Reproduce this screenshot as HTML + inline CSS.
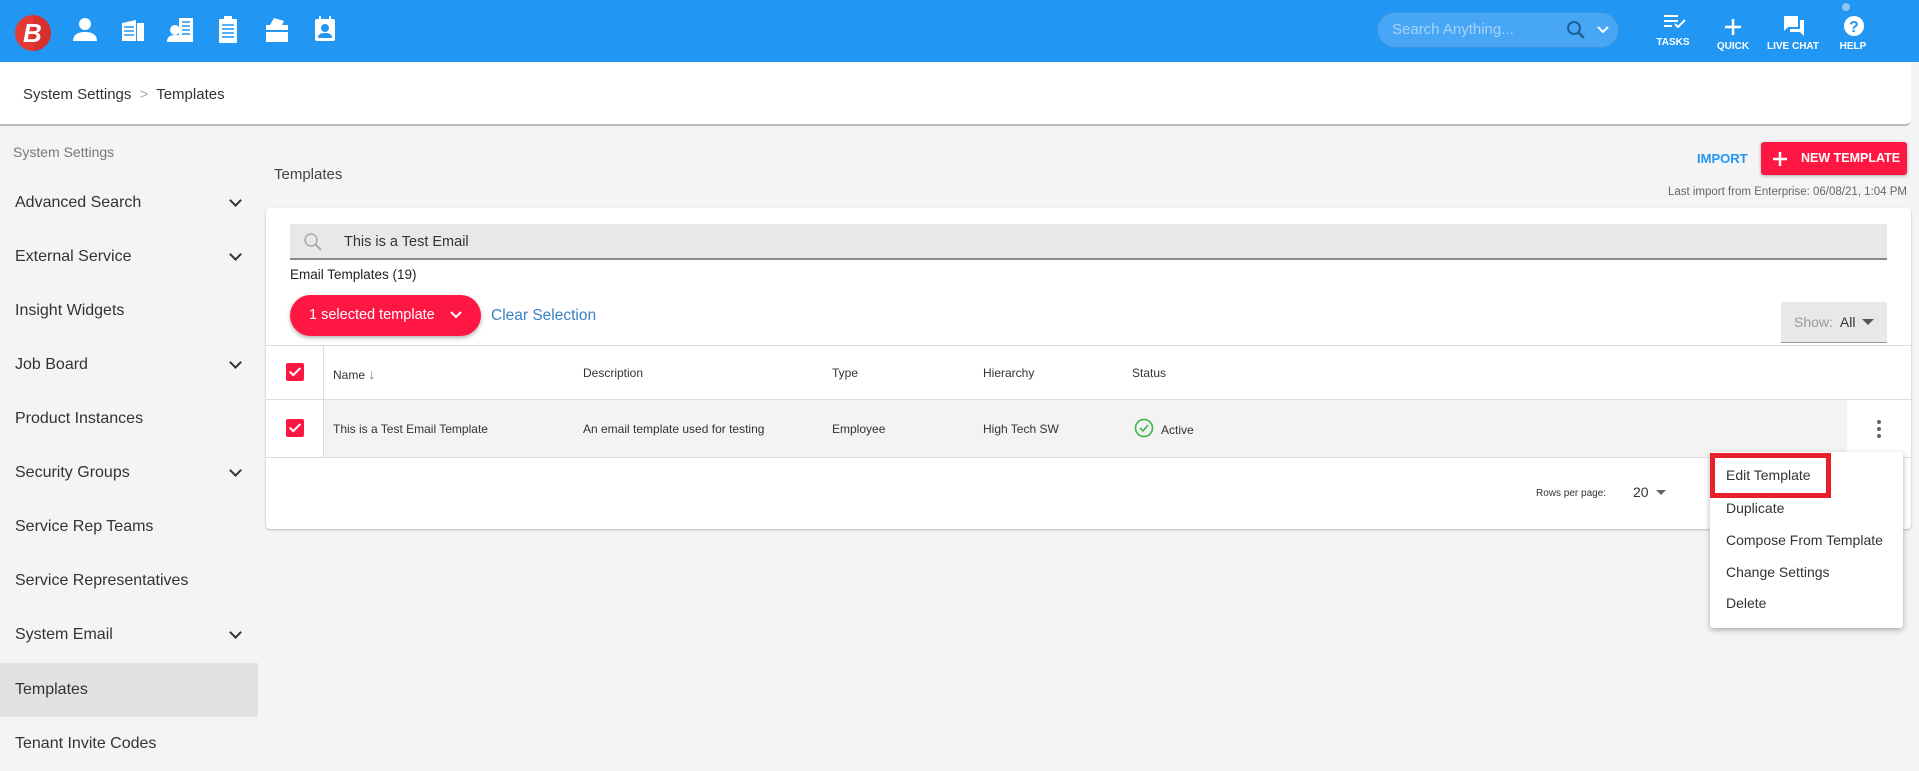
<!DOCTYPE html>
<html><head><meta charset="utf-8"><style>
*{box-sizing:border-box;margin:0;padding:0}
body{width:1919px;height:766px;overflow:hidden;background:#f4f4f4;font-family:"Liberation Sans",sans-serif;color:#333;position:relative}
.abs{position:absolute;white-space:nowrap}
.hdr{left:0;top:0;width:1919px;height:62px;background:#2196f3}
.bc{left:0;top:62px;width:1911px;height:64px;background:#fff;border-bottom:2px solid #bbb;border-radius:0 0 6px 0}
.side{left:0;top:126px;width:258px;height:640px}
.si{position:absolute;left:0;width:258px;height:54px;line-height:54px;padding-left:15px;font-size:16px;color:#333}
.si .ch{position:absolute;right:18px;top:20px;width:9px;height:9px;border-right:2px solid #333;border-bottom:2px solid #333;transform:rotate(45deg)}
.card{left:266px;top:208px;width:1645px;height:321px;background:#fff;border-radius:4px;box-shadow:0 1px 2px rgba(0,0,0,.25)}
.cb{position:absolute;width:18px;height:18px;background:#ff1744;border-radius:2px}
.cb:after{content:"";position:absolute;left:6px;top:2px;width:4px;height:9px;border-right:2px solid #fff;border-bottom:2px solid #fff;transform:rotate(45deg)}
.th{position:absolute;font-size:12px;color:#333;white-space:nowrap}
.ic{fill:#fff}
.nl{position:absolute;color:#fff;font-size:10px;font-weight:bold;text-align:center;width:70px}
.mi{position:absolute;left:1726px;font-size:14px;color:#333;white-space:nowrap}
</style></head><body>
<div class="abs hdr">
<svg class="abs" style="left:14px;top:14px" width="38" height="38" viewBox="0 0 38 38"><circle cx="19" cy="19" r="18" fill="#e53935"/><path d="M19 1a18 18 0 0 1 0 36z" fill="#c62828" opacity=".5"/><text x="9" y="28" font-family="Liberation Sans" font-weight="bold" font-style="italic" font-size="26" fill="#fff">B</text></svg>
<svg class="abs" style="left:72px;top:18px" width="28" height="24" viewBox="0 0 28 24"><circle class="ic" cx="13" cy="6" r="6"/><path class="ic" d="M1 23c0-7 6-9 12-9s12 2 12 9z"/></svg>
<svg class="abs" style="left:120px;top:19px" width="26" height="22"><path class="ic" d="M2 4l14-3v21H2zM17 4h7v18h-7z"/><path d="M4 8h10M4 12h10M4 16h10" stroke="#2196f3" stroke-width="1.5"/></svg>
<svg class="abs" style="left:167px;top:17px" width="28" height="26"><rect class="ic" x="12" y="1" width="14" height="24"/><circle class="ic" cx="8" cy="13" r="5"/><path class="ic" d="M0 25c0-6 4-7 9-7s8 2 8 7z"/><path d="M15 5h8M15 9h8M15 13h8M15 17h8" stroke="#2196f3" stroke-width="1.5"/></svg>
<svg class="abs" style="left:218px;top:16px" width="20" height="28"><rect class="ic" x="1" y="3" width="18" height="24" rx="1"/><rect class="ic" x="6" y="0" width="8" height="5"/><path d="M4 9h12M4 13h12M4 17h12M4 21h12" stroke="#2196f3" stroke-width="1.5"/></svg>
<svg class="abs" style="left:264px;top:17px" width="26" height="26"><path class="ic" d="M2 8h22v17H2z"/><path class="ic" d="M6 8l4-7 10 3-2 4z"/><path d="M2 14h22" stroke="#2196f3" stroke-width="2"/></svg>
<svg class="abs" style="left:314px;top:16px" width="22" height="26"><rect class="ic" x="1" y="3" width="20" height="22" rx="2"/><rect class="ic" x="5" y="0" width="2" height="5"/><rect class="ic" x="15" y="0" width="2" height="5"/><circle cx="11" cy="12" r="4" fill="#2196f3"/><path d="M4 22c0-4 3-5 7-5s7 1 7 5z" fill="#2196f3"/></svg>
<div class="abs" style="left:1377px;top:12px;width:242px;height:36px;border-radius:18px;background:#47a6f5;border:1px solid #3a95e0"></div>
<div class="abs" style="left:1392px;top:21px;font-size:15px;color:#a6d2fa">Search Anything...</div>
<svg class="abs" style="left:1566px;top:20px" width="20" height="20"><circle cx="8" cy="8" r="6" fill="none" stroke="#1f5f96" stroke-width="2"/><path d="M12 12l6 6" stroke="#1f5f96" stroke-width="2.5"/></svg>
<svg class="abs" style="left:1597px;top:26px" width="12" height="8"><path d="M1 1l5 5 5-5" fill="none" stroke="#fff" stroke-width="2"/></svg>
<div class="abs" style="left:1635px;top:12px;width:1px;height:36px;background:#3b8fd6"></div>
<svg class="abs" style="left:1663px;top:14px" width="24" height="16"><path d="M1 2h14M1 7h14M1 12h8" stroke="#fff" stroke-width="2"/><path d="M12 10l3 3 7-7" fill="none" stroke="#fff" stroke-width="2"/></svg>
<div class="nl" style="left:1638px;top:37px">TASKS</div>
<svg class="abs" style="left:1723px;top:17px" width="20" height="20"><path d="M10 2v16M2 10h16" stroke="#fff" stroke-width="2.5"/></svg>
<div class="nl" style="left:1698px;top:41px">QUICK</div>
<svg class="abs" style="left:1783px;top:15px" width="22" height="22"><path class="ic" d="M1 1h14v11H5l-4 4z"/><path class="ic" d="M17 5h4v16l-4-4H7v-3h10z"/></svg>
<div class="abs" style="left:1842px;top:3px;width:8px;height:8px;border-radius:50%;background:#90c4f3"></div>
<div class="nl" style="left:1758px;top:41px">LIVE CHAT</div>
<svg class="abs" style="left:1843px;top:15px" width="22" height="22"><circle cx="11" cy="11" r="10" fill="#fff"/><text x="6" y="17" font-family="Liberation Sans" font-weight="bold" font-size="16" fill="#2196f3">?</text></svg>
<div class="nl" style="left:1818px;top:41px">HELP</div>
</div>
<div class="abs bc"><div class="abs" style="left:23px;top:24px;font-size:15px;color:#333">System Settings <span style="color:#aaa;margin:0 4px">&gt;</span> Templates</div></div>
<div class="abs side">
<div class="abs" style="left:13px;top:18px;font-size:14px;color:#777">System Settings</div>
<div class="si" style="top:50px">Advanced Search<span class="ch"></span></div>
<div class="si" style="top:104px">External Service<span class="ch"></span></div>
<div class="si" style="top:158px">Insight Widgets</div>
<div class="si" style="top:212px">Job Board<span class="ch"></span></div>
<div class="si" style="top:266px">Product Instances</div>
<div class="si" style="top:320px">Security Groups<span class="ch"></span></div>
<div class="si" style="top:374px">Service Rep Teams</div>
<div class="si" style="top:428px">Service Representatives</div>
<div class="si" style="top:482px">System Email<span class="ch"></span></div>
<div class="si" style="top:537px;background:#e2e2e2">Templates</div>
<div class="si" style="top:591px">Tenant Invite Codes</div>
</div>
<div class="abs" style="left:274px;top:166px;font-size:15px;color:#444">Templates</div>
<div class="abs" style="left:1697px;top:151px;font-size:13px;font-weight:bold;color:#2196f3">IMPORT</div>
<div class="abs" style="left:1761px;top:142px;width:146px;height:33px;background:#ff1744;border-radius:3px;box-shadow:0 1px 3px rgba(0,0,0,.3);color:#fff;font-size:12.5px;font-weight:bold;line-height:33px;padding-left:40px">NEW TEMPLATE</div>
<svg class="abs" style="left:1772px;top:151px" width="16" height="16"><path d="M8 1v14M1 8h14" stroke="#fff" stroke-width="2.5"/></svg>
<div class="abs" style="right:12px;top:186px;font-size:11.5px;color:#666">Last import from Enterprise: 06/08/21, 1:04 PM</div>
<div class="abs card"></div>
<div class="abs" style="left:290px;top:224px;width:1597px;height:36px;background:#e8e8e8;border-bottom:2px solid #888"></div>
<svg class="abs" style="left:303px;top:232px" width="20" height="20"><circle cx="8" cy="8" r="6" fill="none" stroke="#aaa" stroke-width="1.5"/><path d="M12 12l6 6" stroke="#aaa" stroke-width="2"/></svg>
<div class="abs" style="left:344px;top:234px;font-size:14.5px;color:#333">This is a Test Email</div>
<div class="abs" style="left:290px;top:267px;font-size:13.5px;color:#222">Email Templates (19)</div>
<div class="abs" style="left:290px;top:295px;width:191px;height:41px;border-radius:21px;background:#ff1744;box-shadow:0 2px 4px rgba(0,0,0,.3);color:#fff;font-size:14.5px;line-height:41px;padding-left:19px">1 selected template</div>
<svg class="abs" style="left:450px;top:311px" width="12" height="8"><path d="M1 1l5 5 5-5" fill="none" stroke="#fff" stroke-width="2"/></svg>
<div class="abs" style="left:491px;top:307px;font-size:15.5px;color:#3b82c4">Clear Selection</div>
<div class="abs" style="left:1781px;top:302px;width:106px;height:41px;background:#e8e8e8;border-bottom:1px solid #999;font-size:14px;line-height:41px;padding-left:13px;color:#999">Show:&nbsp; <span style="color:#333">All</span></div>
<svg class="abs" style="left:1862px;top:319px" width="12" height="7"><path d="M0 0h12L6 6z" fill="#555"/></svg>
<div class="abs" style="left:266px;top:345px;width:1645px;height:1px;background:#ddd"></div>
<div class="abs" style="left:266px;top:399px;width:1645px;height:1px;background:#ddd"></div>
<div class="abs" style="left:266px;top:457px;width:1645px;height:1px;background:#ddd"></div>
<div class="abs" style="left:323px;top:400px;width:1524px;height:57px;background:#f3f3f3"></div>
<div class="abs" style="left:323px;top:346px;width:1px;height:111px;background:#ddd"></div>
<div class="cb" style="left:286px;top:363px"></div>
<div class="cb" style="left:286px;top:419px"></div>
<div class="th" style="left:333px;top:366px">Name <span style="color:#777;font-size:14px">↓</span></div>
<div class="th" style="left:583px;top:366px">Description</div>
<div class="th" style="left:832px;top:366px">Type</div>
<div class="th" style="left:983px;top:366px">Hierarchy</div>
<div class="th" style="left:1132px;top:366px">Status</div>
<div class="th" style="left:333px;top:422px">This is a Test Email Template</div>
<div class="th" style="left:583px;top:422px">An email template used for testing</div>
<div class="th" style="left:832px;top:422px">Employee</div>
<div class="th" style="left:983px;top:422px">High Tech SW</div>
<svg class="abs" style="left:1134px;top:418px" width="20" height="20"><circle cx="10" cy="10" r="8.5" fill="none" stroke="#3bb54a" stroke-width="1.6"/><path d="M6 10l3 3 5-6" fill="none" stroke="#3bb54a" stroke-width="1.6"/></svg>
<div class="th" style="left:1161px;top:423px">Active</div>
<svg class="abs" style="left:1875px;top:419px" width="8" height="20"><circle cx="4" cy="3" r="2" fill="#666"/><circle cx="4" cy="10" r="2" fill="#666"/><circle cx="4" cy="17" r="2" fill="#666"/></svg>
<div class="abs" style="left:1536px;top:488px;font-size:10px;color:#333">Rows per page:</div>
<div class="abs" style="left:1633px;top:484px;font-size:14px;color:#333">20</div>
<svg class="abs" style="left:1656px;top:490px" width="10" height="6"><path d="M0 0h10L5 5z" fill="#666"/></svg>
<div class="abs" style="left:1710px;top:452px;width:193px;height:176px;background:#fff;border-radius:3px;box-shadow:0 2px 6px rgba(0,0,0,.3)"></div>
<div class="abs" style="left:1710px;top:453px;width:121px;height:45px;border:5px solid #e8202a"></div>
<div class="mi" style="top:467px">Edit Template</div>
<div class="mi" style="top:500px">Duplicate</div>
<div class="mi" style="top:532px">Compose From Template</div>
<div class="mi" style="top:564px">Change Settings</div>
<div class="mi" style="top:595px">Delete</div>
</body></html>
